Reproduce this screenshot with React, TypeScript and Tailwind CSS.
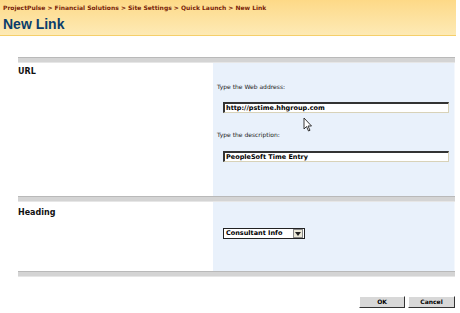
const font = { fontFamily: '"DejaVu Sans", Verdana, sans-serif' }

function Bar() {
  return <div className="h-[6px] bg-[#d4d4d4] border-t border-[#b9b9b9] border-b border-b-[#e6e6e6]" />
}

function TextBox({ value }: { value: string }) {
  return (
    <div className="h-[11px] w-[226px] bg-white border-t-2 border-l-2 border-t-[#333] border-l-[#333] border-r border-b border-r-[#d8d2b8] border-b-[#d8d2b8] flex items-center pl-[1px] text-[6.5px] font-bold text-black leading-none">
      {value}
    </div>
  )
}

export default function App() {
  return (
    <div className="w-[460px] h-[313px] bg-white overflow-hidden relative" style={font}>
      {/* title area */}
      <div className="h-[36px] w-[456px] bg-gradient-to-b from-[#fdd987] to-[#fdeab5] border-b border-[#f5cf6a] px-[3px] pt-[4px]">
        <div className="text-[6px] font-bold text-[#7a1f08] leading-[8px]">
          ProjectPulse &gt; Financial Solutions &gt; Site Settings &gt; Quick Launch &gt; New Link
        </div>
        <div className="text-[14px] font-bold text-[#0b3d6b] leading-[18px] mt-[3px] font-['Liberation_Sans',Arial,sans-serif]">
          New Link
        </div>
      </div>

      <div className="pl-[18px] pr-[5px] pt-[21px]">
        <Bar />
        <div className="grid grid-cols-[195px_1fr] h-[133px]">
          <div className="pt-[4px] text-[8px] font-bold text-[#111] leading-[10px]">URL</div>
          <div className="bg-[#e9f1fb] border-r border-[#f4f8fd] pl-[4px] pt-[20px]">
            <div className="text-[6px] text-[#222] leading-[8px]">Type the Web address:</div>
            <div className="mt-[11px] ml-[6px]">
              <TextBox value="http://pstime.hhgroup.com" />
            </div>
            <div className="mt-[18px] text-[6px] text-[#222] leading-[8px]">Type the description:</div>
            <div className="mt-[12px] ml-[6px]">
              <TextBox value="PeopleSoft Time Entry" />
            </div>
          </div>
        </div>
        <Bar />
        <div className="grid grid-cols-[195px_1fr] h-[69px]">
          <div className="pt-[6px] text-[8px] font-bold text-[#111] leading-[10px]">Heading</div>
          <div className="bg-[#e9f1fb] border-r border-[#f4f8fd] pl-[10px] pt-[26px]">
            <div className="h-[11px] w-[82px] bg-white border border-[#222] flex items-center">
              <span className="flex-1 pl-[2px] text-[6.5px] font-bold text-black leading-none">Consultant Info</span>
              <span className="w-[10px] h-[9px] mr-[1px] bg-[#ece9d8] border border-[#888] flex items-center justify-center">
                <svg width="6" height="4" viewBox="0 0 6 4">
                  <path d="M0 0 L6 0 L3 4 Z" fill="#222" />
                </svg>
              </span>
            </div>
          </div>
        </div>
        <Bar />
        <div className="flex justify-end gap-[3px] mt-[19px]">
          <button className="w-[46px] h-[12px] bg-[#d8d8d8] border border-t-white border-l-white border-r-[#333] border-b-[#333] text-[6px] font-bold text-black leading-none">
            OK
          </button>
          <button className="w-[47px] h-[12px] bg-[#d8d8d8] border border-t-white border-l-white border-r-[#333] border-b-[#333] text-[6px] font-bold text-black leading-none">
            Cancel
          </button>
        </div>
      </div>

      {/* mouse pointer */}
      <svg className="absolute left-[303px] top-[117px]" width="10" height="15" viewBox="0 0 10 15">
        <path d="M1 1 L1 12 L3.5 9.5 L5.5 14 L7 13.3 L5 9 L8.5 9 Z" fill="white" stroke="#222" strokeWidth="0.9" />
      </svg>
    </div>
  )
}
